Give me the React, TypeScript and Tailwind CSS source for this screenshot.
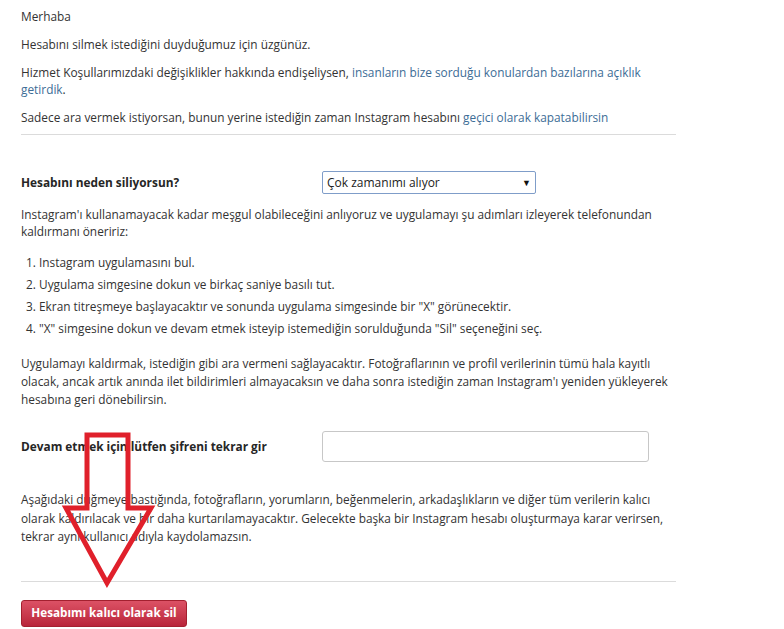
export default function App() {
  return (
    <div className="relative min-h-[629px] w-[784px] bg-white px-[21px] pt-[8px] font-['Open_Sans',sans-serif] text-[11.85px] text-[#333]">
      <div className="w-[655px]">
        <p className="leading-[17px]">Merhaba</p>
        <p className="mt-[11px] leading-[17px]">Hesabını silmek istediğini duyduğumuz için üzgünüz.</p>
        <p className="mt-[11px] leading-[17px]">
          Hizmet Koşullarımızdaki değişiklikler hakkında endişeliysen,{" "}
          <a className="text-[#3d6d96]">insanların bize sorduğu konulardan bazılarına açıklık getirdik</a>.
        </p>
        <p className="mt-[11px] leading-[17px]">
          Sadece ara vermek istiyorsan, bunun yerine istediğin zaman Instagram hesabını{" "}
          <a className="text-[#3d6d96]">geçici olarak kapatabilirsin</a>
        </p>
        <div className="mt-[8px] h-px bg-[#dbdbdb]" />

        <div className="mt-[36px] flex items-center">
          <label className="w-[301px] font-bold text-[#262626]">Hesabını neden siliyorsun?</label>
          <div className="flex h-[23px] w-[214px] items-center justify-between rounded-[2px] border border-[#7f9dc9] px-[4px] text-[12px] text-[#222]">
            <span>Çok zamanımı alıyor</span>
            <span className="text-[9px] text-[#111]">▼</span>
          </div>
        </div>

        <p className="mt-[12px] leading-[17px]">
          Instagram'ı kullanamayacak kadar meşgul olabileceğini anlıyoruz ve uygulamayı şu adımları izleyerek telefonundan kaldırmanı öneririz:
        </p>
        <ol className="mt-[11px]">
          {[
            "Instagram uygulamasını bul.",
            "Uygulama simgesine dokun ve birkaç saniye basılı tut.",
            'Ekran titreşmeye başlayacaktır ve sonunda uygulama simgesinde bir "X" görünecektir.',
            '"X" simgesine dokun ve devam etmek isteyip istemediğin sorulduğunda "Sil" seçeneğini seç.',
          ].map((item, i) => (
            <li key={i} className="flex leading-[22px]">
              <span className="ml-[5px] w-[13px]">{i + 1}.</span>
              <span>{item}</span>
            </li>
          ))}
        </ol>

        <p className="mt-[15px] leading-[18px]">
          Uygulamayı kaldırmak, istediğin gibi ara vermeni sağlayacaktır. Fotoğraflarının ve profil verilerinin tümü hala kayıtlı olacak, ancak artık anında ilet bildirimleri almayacaksın ve daha sonra istediğin zaman Instagram'ı yeniden yükleyerek hesabına geri dönebilirsin.
        </p>

        <div className="mt-[23px] flex items-center">
          <label className="w-[301px] font-bold text-[#262626]">Devam etmek için lütfen şifreni tekrar gir</label>
          <input type="password" className="h-[31px] w-[327px] rounded-[3px] border border-[#c7c7c7] bg-white outline-none" />
        </div>

        <p className="mt-[28px] leading-[18.5px]">
          Aşağıdaki düğmeye bastığında, fotoğrafların, yorumların, beğenmelerin, arkadaşlıkların ve diğer tüm verilerin kalıcı olarak kaldırılacak ve bir daha kurtarılamayacaktır. Gelecekte başka bir Instagram hesabı oluşturmaya karar verirsen, tekrar aynı kullanıcı adıyla kaydolamazsın.
        </p>
        <div className="mt-[35px] h-px bg-[#dbdbdb]" />

        <button className="mt-[18px] h-[27px] w-[166px] rounded-[3px] border border-[#a3202f] bg-gradient-to-b from-[#dc5165] to-[#b9233a] text-[11.7px] font-bold text-white">
          Hesabımı kalıcı olarak sil
        </button>
      </div>

      <svg className="pointer-events-none absolute left-0 top-0" width="784" height="629">
        <polygon
          points="87,435 128,435 128,508 151,508 107,583 66,508 87,508"
          fill="none"
          stroke="#e0202b"
          strokeWidth="5"
          strokeLinejoin="miter"
        />
      </svg>
    </div>
  );
}
